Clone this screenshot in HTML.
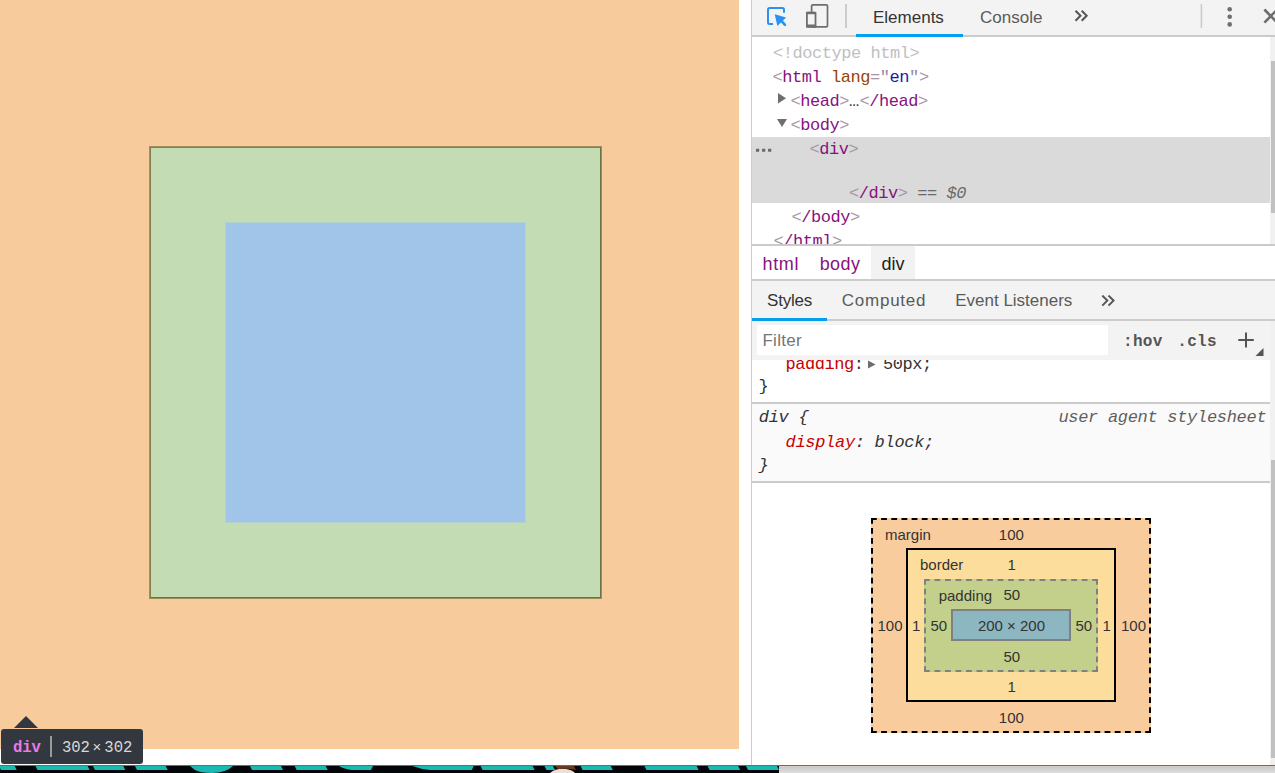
<!DOCTYPE html>
<html><head><meta charset="utf-8">
<style>
*{box-sizing:border-box;margin:0;padding:0}
html,body{width:1275px;height:773px;overflow:hidden;background:#fff}
body{position:relative;font-family:"Liberation Sans",sans-serif}
.a{position:absolute}
.t{position:absolute;white-space:pre;line-height:1}
.m{font-family:"Liberation Mono",monospace}
.tg{color:#881280}.br{color:#a894a6}.an{color:#994500}.av{color:#1a1aa6}
</style></head><body>

<!-- page viewport -->
<div class="a" style="left:0;top:0;width:739px;height:749px;background:#f8cb9c"></div>
<!-- element box -->
<div class="a" style="left:149px;top:146px;width:453px;height:453px;background:#a08d5d;border-style:solid;border-width:1px;border-color:#a38e5e #9d8d5c #9d8d5c #a38e5e"></div>
<div class="a" style="left:150px;top:147px;width:451px;height:451px;border-style:solid;border-width:1px;border-color:#817f51 #66754a #66754a #817f51"></div>
<div class="a" style="left:151px;top:148px;width:449px;height:449px;background:#c3dcb4"></div>
<div class="a" style="left:225px;top:222px;width:301px;height:301px;background:#b2d1cf"></div>
<div class="a" style="left:226px;top:223px;width:299px;height:299px;background:#a1c5e8"></div>

<!-- white strip under page -->
<div class="a" style="left:0;top:749px;width:751px;height:16px;background:#fff"></div>

<!-- tooltip -->
<div class="a" style="left:14px;top:716px;width:0;height:0;border-left:12px solid transparent;border-right:12px solid transparent;border-bottom:12px solid #333740"></div>
<div class="a" style="left:1px;top:729px;width:142px;height:35px;background:#333740;border-radius:3px"></div>
<div class="t m" style="left:12.9px;top:740.8px;font-size:15.6px;font-weight:bold;color:#ee78e6">div</div>
<div class="a" style="left:50px;top:736px;width:2px;height:21px;background:#9a9a9a"></div>
<div class="t m" style="left:61.9px;top:740.8px;font-size:15.6px;color:#d9d9d9">302</div><div class="t" style="left:92.5px;top:738.5px;font-size:15px;color:#d9d9d9">×</div><div class="t m" style="left:104.3px;top:740.8px;font-size:15.6px;color:#d9d9d9">302</div>

<!-- devtools -->
<div class="a" style="left:751px;top:0;width:1px;height:765px;background:#cccccc"></div>
<div class="a" style="left:752px;top:0;width:523px;height:35px;background:#f3f3f3"></div>
<div class="a" style="left:752px;top:35px;width:523px;height:2px;background:#cbcbcb"></div>
<div class="a" style="left:856px;top:34px;width:107px;height:3px;background:#03a0f0"></div>
<svg class="a" style="left:752px;top:0" width="523" height="35" viewBox="752 0 523 35">
 <path d="M773 24 H769.5 Q768 24 768 22.5 V9.5 Q768 8 769.5 8 H782.5 Q784 8 784 9.5 V12.8" fill="none" stroke="#2a92f2" stroke-width="2"/>
 <path d="M774.7 14.3 L786.1 17.4 L777.4 26.1 Z" fill="#2a92f2"/>
 <path d="M780.5 20 L785 24.8" stroke="#2a92f2" stroke-width="2.6" stroke-linecap="round"/>
 <rect x="811.6" y="4.8" width="15.9" height="22.1" rx="1.2" fill="none" stroke="#6e6e6e" stroke-width="1.7"/>
 <rect x="806.9" y="12.7" width="8.6" height="13.8" rx="1" fill="#f3f3f3" stroke="#6e6e6e" stroke-width="1.8"/>
 <rect x="806" y="11.8" width="10.2" height="2.4" fill="#6e6e6e"/>
 <rect x="806" y="24.6" width="10.2" height="3.1" rx="1" fill="#6e6e6e"/>
 <rect x="845" y="4" width="2" height="24" fill="#cccccc"/>
 <path d="M1075.5 10.8 L1080.5 15.8 L1075.5 20.8 M1081.7 10.8 L1086.7 15.8 L1081.7 20.8" fill="none" stroke="#555" stroke-width="2"/>
 <rect x="1200.6" y="4" width="1.6" height="24" fill="#cccccc"/>
 <circle cx="1229.7" cy="9.2" r="2.3" fill="#6e6e6e"/>
 <circle cx="1229.7" cy="16.8" r="2.3" fill="#6e6e6e"/>
 <circle cx="1229.7" cy="24.4" r="2.3" fill="#6e6e6e"/>
 <path d="M1264.4 9.5 L1277.2 22.6 M1264.4 22.6 L1277.2 9.5" stroke="#6e6e6e" stroke-width="2.6"/>
</svg>
<div class="t" style="left:873px;top:9px;font-size:17px;color:#333">Elements</div>
<div class="t" style="left:980px;top:9px;font-size:17px;color:#5a5a5a">Console</div>

<!-- DOM tree -->
<div class="a" style="left:752px;top:137px;width:518px;height:66px;background:#dadada"></div>
<div class="a" style="left:1270px;top:37px;width:5px;height:207px;background:#f1f1f1"></div>
<div class="a" style="left:1271px;top:61px;width:4px;height:152px;background:#c1c1c1"></div>
<div class="t m" style="left:773px;top:44.7px;font-size:17px;letter-spacing:-0.45px;color:#c0c0c0">&lt;!doctype html&gt;</div>
<div class="t m" style="left:772.5px;top:68.8px;font-size:17px;letter-spacing:-0.45px"><span class="br">&lt;</span><span class="tg">html</span> <span class="an">lang</span><span class="br">=</span><span style="color:#8f8aa8">"</span><span class="av">en</span><span style="color:#8f8aa8">"</span><span class="br">&gt;</span></div>
<div class="t m" style="left:790.5px;top:92.7px;font-size:17px;letter-spacing:-0.45px"><span class="br">&lt;</span><span class="tg">head</span><span class="br">&gt;</span><span style="color:#333;letter-spacing:0.2px">…</span><span class="br">&lt;</span><span class="tg">/head</span><span class="br">&gt;</span></div>
<div class="t m" style="left:790.5px;top:116.8px;font-size:17px;letter-spacing:-0.45px"><span class="br">&lt;</span><span class="tg">body</span><span class="br">&gt;</span></div>
<div class="t m" style="left:809.5px;top:140.8px;font-size:17px;letter-spacing:-0.45px"><span class="br">&lt;</span><span class="tg">div</span><span class="br">&gt;</span></div>
<div class="t m" style="left:849px;top:184.8px;font-size:17px;letter-spacing:-0.45px"><span class="br">&lt;</span><span class="tg">/div</span><span class="br">&gt;</span> <span style="color:#6a6a6a">==</span> <span style="color:#6a6a6a;font-style:italic">$0</span></div>
<div class="t m" style="left:791.5px;top:208.6px;font-size:17px;letter-spacing:-0.45px"><span class="br">&lt;</span><span class="tg">/body</span><span class="br">&gt;</span></div>
<div class="t m" style="left:773.5px;top:232.7px;font-size:17px;letter-spacing:-0.45px"><span class="br">&lt;</span><span class="tg">/html</span><span class="br">&gt;</span></div>
<svg class="a" style="left:752px;top:37px" width="518" height="207" viewBox="752 37 518 207">
 <path d="M778 93 L786 98.2 L778 103.4 Z" fill="#6e6e6e"/>
 <path d="M777 119 L787 119 L782 127 Z" fill="#6e6e6e"/>
 <g fill="#666"><rect x="756" y="148.7" width="3.1" height="3.1" rx="0.5"/><rect x="762.1" y="148.7" width="3.1" height="3.1" rx="0.5"/><rect x="768.1" y="148.7" width="3.1" height="3.1" rx="0.5"/></g>
</svg>

<!-- breadcrumbs -->
<div class="a" style="left:752px;top:244px;width:523px;height:2px;background:#cbcbcb"></div>
<div class="a" style="left:871px;top:246px;width:44px;height:33px;background:#f2f2f2"></div>
<div class="a" style="left:752px;top:279px;width:523px;height:2px;background:#cbcbcb"></div>
<div class="t" style="left:762.6px;top:255px;font-size:18px;letter-spacing:0.6px;color:#881280">html</div>
<div class="t" style="left:819.7px;top:255px;font-size:18px;letter-spacing:0.4px;color:#881280">body</div>
<div class="t" style="left:881.6px;top:255px;font-size:18px;color:#222">div</div>

<!-- styles tabs -->
<div class="a" style="left:752px;top:281px;width:523px;height:38px;background:#f3f3f3"></div>
<div class="a" style="left:752px;top:319px;width:523px;height:2px;background:#cbcbcb"></div>
<div class="a" style="left:752px;top:318px;width:75px;height:3px;background:#03a0f0"></div>
<div class="t" style="left:767px;top:291.8px;font-size:17px;letter-spacing:-0.2px;color:#333">Styles</div>
<div class="t" style="left:841.8px;top:291.8px;font-size:17px;letter-spacing:0.75px;color:#5a5a5a">Computed</div>
<div class="t" style="left:955.2px;top:291.8px;font-size:17px;color:#5a5a5a">Event Listeners</div>
<svg class="a" style="left:1095px;top:295px" width="26" height="22" viewBox="1095 295 26 22">
 <path d="M1102.3 295.6 L1107.3 300.6 L1102.3 305.6 M1108.5 295.6 L1113.5 300.6 L1108.5 305.6" fill="none" stroke="#555" stroke-width="2"/>
</svg>

<!-- filter bar -->
<div class="a" style="left:752px;top:321px;width:518px;height:39px;background:#f3f3f3"></div>
<div class="a" style="left:757px;top:325px;width:351px;height:30px;background:#fff"></div>
<div class="t" style="left:762.4px;top:331.8px;font-size:17px;letter-spacing:0.3px;color:#757575">Filter</div>
<div class="t m" style="left:1123px;top:333.8px;font-size:16px;font-weight:bold;letter-spacing:0.3px;color:#555">:hov</div>
<div class="t m" style="left:1177.3px;top:333.8px;font-size:16px;font-weight:bold;letter-spacing:0.3px;color:#555">.cls</div>
<svg class="a" style="left:1230px;top:328px" width="40" height="30" viewBox="1230 328 40 30">
 <path d="M1238.3 340 H1253.8 M1246 332.6 V347.5" stroke="#555" stroke-width="2"/>
 <path d="M1263.5 348 V356 H1255.5 Z" fill="#555"/>
</svg>

<!-- styles pane -->
<div class="t m" style="left:785.5px;top:356px;font-size:17px;letter-spacing:-0.45px;color:#c80000">padding<span style="color:#333">:</span></div>
<svg class="a" style="left:866px;top:358px" width="12" height="14" viewBox="866 358 12 14"><path d="M868 360.5 L875.6 364.5 L868 368.5 Z" fill="#6e6e6e"/></svg>
<div class="t m" style="left:883px;top:356px;font-size:17px;letter-spacing:-0.45px;color:#333">50px;</div>
<div class="a" style="left:752px;top:356px;width:518px;height:4px;background:#f3f3f3"></div>
<div class="t m" style="left:758.5px;top:377.5px;font-size:17px;letter-spacing:-0.45px;color:#333">}</div>
<div class="a" style="left:752px;top:402px;width:518px;height:2px;background:#cbcbcb"></div>
<div class="a" style="left:752px;top:404px;width:518px;height:77px;background:#fafafa"></div>
<div class="t m" style="left:758.8px;top:408.9px;font-size:17px;font-style:italic;letter-spacing:-0.3px;color:#333">div {</div>
<div class="t m" style="left:785.5px;top:433.7px;font-size:17px;font-style:italic;letter-spacing:-0.3px;color:#c80000">display<span style="color:#333">: block;</span></div>
<div class="t m" style="left:758.5px;top:456.5px;font-size:17px;font-style:italic;letter-spacing:-0.3px;color:#333">}</div>
<div class="t m" style="left:1058.4px;top:409px;font-size:17px;font-style:italic;letter-spacing:-0.3px;color:#5f5f5f">user agent stylesheet</div>
<div class="a" style="left:752px;top:481px;width:518px;height:2px;background:#cbcbcb"></div>
<div class="a" style="left:1270px;top:321px;width:5px;height:444px;background:#f1f1f1"></div>
<div class="a" style="left:1271px;top:460px;width:4px;height:298px;background:#c1c1c1"></div>

<!-- box model -->
<svg class="a" style="left:860px;top:510px" width="300" height="230" viewBox="860 510 300 230">
 <rect x="871" y="518" width="280" height="215" fill="#f9cc9d"/>
 <line x1="871" y1="519" x2="1151" y2="519" stroke="#000" stroke-width="2" stroke-dasharray="5.8 4.356"/><line x1="871" y1="732" x2="1151" y2="732" stroke="#000" stroke-width="2" stroke-dasharray="5.8 4.356"/><line x1="872" y1="518" x2="872" y2="733" stroke="#000" stroke-width="2" stroke-dasharray="5.8 4.162"/><line x1="1150" y1="518" x2="1150" y2="733" stroke="#000" stroke-width="2" stroke-dasharray="5.8 4.162"/>
 <rect x="906" y="548" width="210" height="154" fill="#fddd9b"/>
 <rect x="907" y="549" width="208" height="152" fill="none" stroke="#000" stroke-width="2"/>
 <rect x="924" y="579" width="174" height="93" fill="#c3d08b"/>
 <line x1="924" y1="580" x2="1098" y2="580" stroke="#808080" stroke-width="2" stroke-dasharray="5.8 4.713"/><line x1="924" y1="671" x2="1098" y2="671" stroke="#808080" stroke-width="2" stroke-dasharray="5.8 4.713"/><line x1="925" y1="579" x2="925" y2="672" stroke="#808080" stroke-width="2" stroke-dasharray="5.8 3.889"/><line x1="1097" y1="579" x2="1097" y2="672" stroke="#808080" stroke-width="2" stroke-dasharray="5.8 3.889"/>
 <rect x="952" y="610" width="118" height="30" fill="#8cb6c0" stroke="#808080" stroke-width="2"/>
</svg>
<div class="t" style="left:885px;top:526.8px;font-size:15px;color:#333">margin</div>
<div class="t" style="left:920px;top:556.5px;font-size:15px;color:#333">border</div>
<div class="t" style="left:938.7px;top:587.8px;font-size:15px;color:#333">padding</div>
<div class="t" style="left:977.9px;top:617.7px;font-size:15px;color:#333">200 × 200</div>
<div class="t" style="left:998.8px;top:526.8px;font-size:15px;color:#333">100</div>
<div class="t" style="left:1007.5px;top:556.9px;font-size:15px;color:#333">1</div>
<div class="t" style="left:1003.4px;top:587.4px;font-size:15px;color:#333">50</div>
<div class="t" style="left:877.5px;top:617.9px;font-size:15px;color:#333">100</div>
<div class="t" style="left:912px;top:617.9px;font-size:15px;color:#333">1</div>
<div class="t" style="left:930.5px;top:617.9px;font-size:15px;color:#333">50</div>
<div class="t" style="left:1075.5px;top:617.9px;font-size:15px;color:#333">50</div>
<div class="t" style="left:1102.5px;top:617.9px;font-size:15px;color:#333">1</div>
<div class="t" style="left:1121px;top:617.9px;font-size:15px;color:#333">100</div>
<div class="t" style="left:1003.4px;top:648.9px;font-size:15px;color:#333">50</div>
<div class="t" style="left:1007.5px;top:678.8px;font-size:15px;color:#333">1</div>
<div class="t" style="left:998.8px;top:710.0px;font-size:15px;color:#333">100</div>

<!-- taskbar -->
<div class="a" style="left:0;top:765px;width:1275px;height:1px;background:#1a7fd8"></div>
<div class="a" style="left:0;top:766px;width:779px;height:7px;background:#020608"></div>
<svg class="a" style="left:0;top:766px" width="779" height="7" viewBox="0 766 779 7"><g fill="#1ab9b3"><path d="M-1.0 766 L14.7 766 L16.7 770 L1.0 770 Z"/><path d="M35.5 766 L87.6 766 L89.6 770 L37.5 770 Z"/><path d="M93.0 766 L123.3 766 L125.3 770 L95.0 770 Z"/><path d="M135.0 766 L165.7 766 L167.7 770 L137.0 770 Z"/><path d="M250.0 766 L281.0 766 L283.0 770 L252.0 770 Z"/><path d="M294.7 766 L325.7 766 L327.7 770 L296.7 770 Z"/><path d="M480.6 766 L532.7 766 L534.7 770 L482.6 770 Z"/><path d="M544.5 766 L553.0 766 L555.0 770 L546.5 770 Z"/><path d="M580.6 766 L610.8 766 L612.8 770 L582.6 770 Z"/><path d="M644.5 766 L696.6 766 L698.6 770 L646.5 770 Z"/><path d="M707.6 766 L738.2 766 L740.2 770 L709.6 770 Z"/><path d="M746.0 766 L777.0 766 L779.0 770 L748.0 770 Z"/><path d="M190 766 L233 766 Q226 773 212 773 Q200 773 195 770 Z"/><path d="M339 766 L373 766 L371 770 L352 770 Q344 769 339 766 Z"/><path d="M412.5 766 L473.7 766 L471.9 770 L430 770 Q420 769 412.5 766 Z"/></g>
<path d="M550 773 Q556 768 566 769 Q573 770 575 773 Z" fill="#e8e0dc"/><path d="M555 766 L574 766 L576 770 Q568 768 558 769 Z" fill="#6a3a1e"/></svg>
<div class="a" style="left:779px;top:766px;width:496px;height:7px;background:linear-gradient(#d6cfc9 0,#d6cfc9 1px,#c9c9c9 1px,#dedede 7px)"></div>

</body></html>
